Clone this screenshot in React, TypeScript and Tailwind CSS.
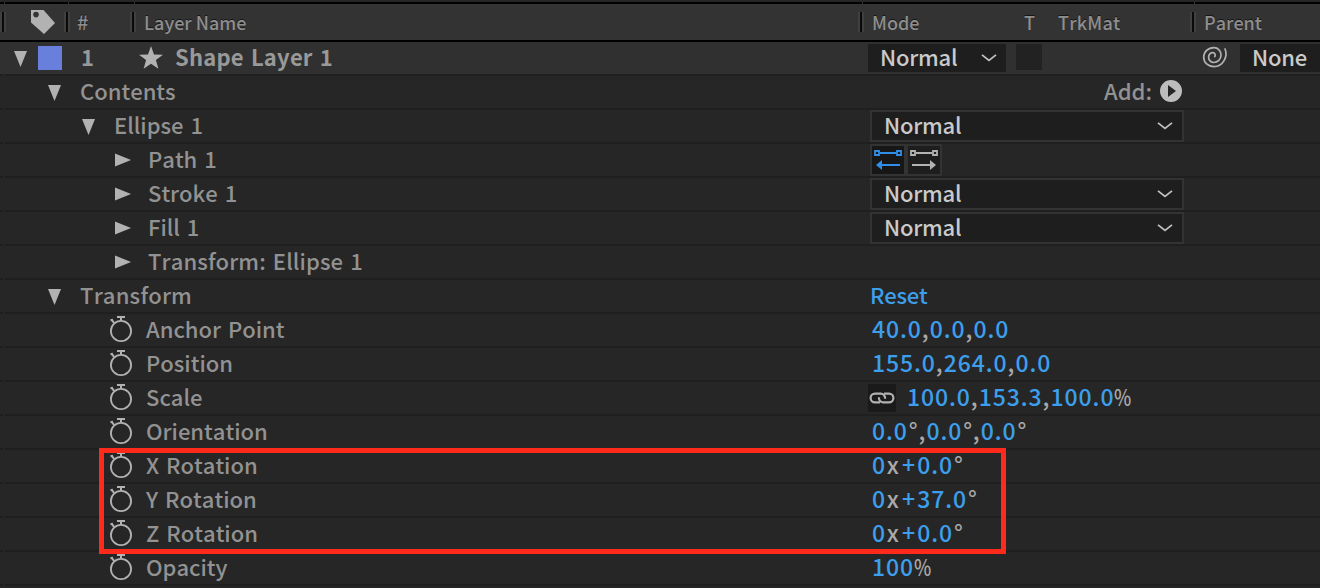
import type { ReactNode } from "react";

const SANS = "font-['Noto_Sans_CJK_SC','Noto_Sans',sans-serif]";

function Down() {
  return (
    <svg className="h-4 w-[13px] shrink-0" viewBox="0 0 13 16">
      <path d="M0 0H13L6.5 16Z" fill="#b2b2b2" />
    </svg>
  );
}

function Right() {
  return (
    <svg className="h-[14px] w-4 shrink-0" viewBox="0 0 16 14">
      <path d="M0 0.5L16 7L0 13.5Z" fill="#b2b2b2" />
    </svg>
  );
}

function Stopwatch() {
  return (
    <svg className="h-7 w-6 shrink-0" viewBox="0 0 24 28" fill="none" stroke="#b2b2b2">
      <circle cx="12" cy="17" r="10.1" strokeWidth="1.8" />
      <path d="M8 3H16M12 3V7M1.5 6.3L4 5.6M3 6L5 9" strokeWidth="2" />
    </svg>
  );
}

function Chevron() {
  return (
    <svg className="h-2 w-4 shrink-0" viewBox="0 0 16 8" fill="none" stroke="#c0c0c0" strokeWidth="1.8">
      <path d="M1 0.9L8 6.4L15 0.9" />
    </svg>
  );
}

function Divider() {
  return (
    <span className="flex h-5 shrink-0">
      <i className="w-0.5 bg-[#404040]" />
      <i className="w-0.5 bg-[#0a0a0a]" />
      <i className="w-0.5 bg-[#404040]" />
    </span>
  );
}

function Label({ children, className = "font-medium text-[#929292]" }: { children: ReactNode; className?: string }) {
  return (
    <span className={`-mt-1 block whitespace-nowrap text-[22px] leading-8 [font-kerning:none] [word-spacing:2px] ${className}`}>
      {children}
    </span>
  );
}

function Row({ left, right, active = false }: { left: ReactNode; right?: ReactNode; active?: boolean }) {
  return (
    <div className="h-[34px] shrink-0">
      <div className={`flex h-8 ${active ? "bg-[#303030]" : "bg-[#262626]"}`}>
        <div className="flex w-[868px] shrink-0 items-center">{left}</div>
        <div className="flex min-w-0 grow items-center">{right}</div>
      </div>
      <div className="flex h-0.5 gap-0.5 bg-[#272727]">
        <i className="w-[3px] bg-[#1f1f1f]" />
        <i className="grow bg-[#1f1f1f]" />
      </div>
    </div>
  );
}

function WideSelect() {
  return (
    <div className="ml-0.5 flex h-8 w-[314px] items-center justify-between border-2 border-[#333] bg-[#1e1e1e] pr-[9px] pl-3">
      <Label className="font-medium tracking-[-.2px] text-[#cacaca]">Normal</Label>
      <Chevron />
    </div>
  );
}

function Value({ children, className = "pl-1" }: { children: ReactNode; className?: string }) {
  return (
    <div className={`-mt-1 flex whitespace-nowrap text-[23px] leading-8 font-medium tracking-[.9px] text-[#3d9fec] ${className}`}>
      {children}
    </div>
  );
}

function Sep({ children, className = "" }: { children: ReactNode; className?: string }) {
  return <span className={`text-[#a9a9a9] ${className}`}>{children}</span>;
}

const Comma = () => <Sep className="w-2">,</Sep>;
const Degree = () => <Sep className="w-[10.6px] pl-px">°</Sep>;
const Percent = () => <Sep className="origin-left scale-x-[.8]">%</Sep>;

function Rotation({ value }: { value: string }) {
  return (
    <Value>
      <span>0</span>
      <Sep className="w-[14.5px] text-center">x</Sep>
      <span className="w-[16.8px] text-center">+</span>
      <span>{value}</span>
      <Degree />
    </Value>
  );
}

function Property({ name }: { name: string }) {
  return (
    <>
      <span className="-mt-1 ml-[109px]"><Stopwatch /></span>
      <Label className="ml-[13px] font-medium text-[#929292]">{name}</Label>
    </>
  );
}

function Child({ name, className = "font-medium text-[#929292]" }: { name: string; className?: string }) {
  return (
    <>
      <span className="mr-[17px] ml-[115px]"><Right /></span>
      <Label className={className}>{name}</Label>
    </>
  );
}

function Header() {
  return (
    <>
      <div className="h-0.5 shrink-0 bg-[#262626]" />
      <div className="flex h-0.5 shrink-0 gap-px bg-[#333]">
        <i className="w-1 bg-black" />
        <i className="w-[63px] bg-black" />
        <i className="w-[65px] bg-black" />
        <i className="w-[727px] bg-black" />
        <i className="w-[331px] bg-black" />
        <i className="grow bg-black" />
      </div>
      <div className="flex h-9 shrink-0 items-center bg-[#333] text-[18px] leading-9 font-medium text-[#8e8e8e] [font-kerning:none] [text-shadow:0_-1.5px_0_#151515]">
        <div className="flex w-16 items-center"><Divider />
          <svg className="ml-[25px] h-6 w-6" viewBox="0 0 24 24">
            <path fillRule="evenodd" d="M0 0H12.5L24 13L13 24L0 12.5ZM5 1.8A2.8 2.8 0 1 0 5 7.4A2.8 2.8 0 1 0 5 1.8Z" fill="#b2b2b2" />
          </svg>
        </div>
        <div className="flex w-[66px] items-center"><Divider /><span className="ml-[7px] text-[20px]">#</span></div>
        <div className="flex w-[728px] items-center"><Divider /><span className="ml-2">Layer Name</span></div>
        <div className="flex w-[332px] items-center"><Divider />
          <span className="ml-2 w-[152px]">Mode</span>
          <span className="w-[34px]">T</span>
          <span className="tracking-[.2px]">TrkMat</span>
        </div>
        <div className="flex grow items-center"><Divider /><span className="ml-2">Parent</span></div>
      </div>
      <div className="h-0.5 shrink-0 bg-black" />
    </>
  );
}

export default function App() {
  return (
    <div className={`relative flex h-[588px] w-[1320px] flex-col overflow-hidden bg-[#262626] text-[#999] ${SANS}`}>
      <Header />
      <Row
        active
        left={
          <>
            <span className="ml-3.5 mt-0.5"><Down /></span>
            <span className="ml-[11px] h-6 w-6 bg-[#6880dc]" />
            <Label className="ml-[19px] font-bold">1</Label>
            <svg className="ml-[45px] h-6 w-6" viewBox="0 0 24 24">
              <path d="M12 0L15 8.4L24 8.7L16.9 14.1L19.4 22.8L12 17.7L4.6 22.8L7.1 14.1L0 8.7L9 8.4Z" fill="#b2b2b2" />
            </svg>
            <Label className="ml-3 font-bold tracking-[.2px]">Shape Layer 1</Label>
          </>
        }
        right={
          <>
            <div className="flex h-7 w-[138px] items-center justify-between bg-[#1e1e1e] pr-[9px] pl-3">
              <Label className="font-medium tracking-[-.2px] text-[#cacaca]">Normal</Label>
              <Chevron />
            </div>
            <span className="-mt-0.5 ml-2.5 h-[26px] w-[26px] bg-[#222]" />
            <svg className="ml-[160px] h-6 w-7" viewBox="0 0 28 24" fill="none" stroke="#b2b2b2" strokeWidth="1.7" strokeLinecap="round">
              <path d="M23 3C26 10 21.5 20.6 12 20.6C6 20.6 1.7 16.5 1.7 11.3C1.7 6 6 1.6 12 1.6C16 1.6 19 5 19 9C19 13.5 15.5 16.5 11.8 16.5C8.8 16.5 6.6 14 6.6 11.2C6.6 8.5 8.5 6.7 10.8 6.7C13 6.7 13.8 9 12.8 10.5" />
            </svg>
            <div className="ml-2.5 flex h-7 grow items-center bg-[#1e1e1e] pl-3">
              <Label className="font-medium tracking-[-.2px] text-[#cacaca]">None</Label>
            </div>
          </>
        }
      />
      <Row
        left={<><span className="mt-0.5 mr-[19px] ml-12"><Down /></span><Label>Contents</Label></>}
        right={
          <>
            <span className="w-[236px]" />
            <Label>Add:</Label>
            <svg className="-mt-0.5 ml-auto h-[22px] w-[22px]" viewBox="0 0 22 22">
              <path fillRule="evenodd" d="M11 0A11 11 0 1 1 11 22A11 11 0 1 1 11 0ZM8 5V17L16 11Z" fill="#bdbdbd" />
            </svg>
            <span className="w-[138px]" />
          </>
        }
      />
      <Row left={<><span className="mt-0.5 mr-[19px] ml-[82px]"><Down /></span><Label>Ellipse 1</Label></>} right={<WideSelect />} />
      <Row
        left={<Child name="Path 1" />}
        right={
          <div className="ml-0.5 flex h-8 w-[72px] justify-between border-2 border-[#333] bg-[#333]">
            <svg className="h-7 w-8 bg-[#171717]" viewBox="0 0 32 28" fill="none" stroke="#308ee8" strokeWidth="1.8">
              <path d="M3 5H7V9H3ZM25 5H29V9H25ZM8 7H24M9 19H28" />
              <path d="M4 19L10 14V24Z" fill="#308ee8" stroke="none" />
            </svg>
            <svg className="h-7 w-8 bg-[#1e1e1e]" viewBox="0 0 32 28" fill="none" stroke="#b2b2b2" strokeWidth="1.8">
              <path d="M3 5H7V9H3ZM25 5H29V9H25ZM8 7H24M4 19H23" />
              <path d="M28 19L22 14V24Z" fill="#b2b2b2" stroke="none" />
            </svg>
          </div>
        }
      />
      <Row left={<Child name="Stroke 1" />} right={<WideSelect />} />
      <Row left={<Child name="Fill 1" />} right={<WideSelect />} />
      <Row left={<Child name="Transform: Ellipse 1" className="font-medium tracking-[.1px] text-[#929292]" />} />
      <Row
        left={<><span className="mt-0.5 mr-[19px] ml-12"><Down /></span><Label className="font-medium tracking-[.2px] text-[#929292]">Transform</Label></>}
        right={<Label className="ml-0.5 font-medium tracking-[-.2px] text-[#3d9fec]">Reset</Label>}
      />
      <Row left={<Property name="Anchor Point" />} right={<Value>40.0<Comma />0.0<Comma />0.0</Value>} />
      <Row left={<Property name="Position" />} right={<Value>155.0<Comma />264.0<Comma />0.0</Value>} />
      <Row
        left={<Property name="Scale" />}
        right={
          <>
            <svg className="h-7 w-7 bg-[#1a1a1a]" viewBox="0 0 28 28" fill="none" stroke="#b2b2b2" strokeWidth="2.2">
              <path d="M12 18.4H7A4.4 4.4 0 0 1 7 9.6H13A4.4 4.4 0 0 1 17 14.8" />
              <path d="M16 9.6H21A4.4 4.4 0 0 1 21 18.4H15A4.4 4.4 0 0 1 11 13.2" />
            </svg>
            <Value className="pl-[11px]">100.0<Comma />153.3<Comma />100.0<Percent /></Value>
          </>
        }
      />
      <Row left={<Property name="Orientation" />} right={<Value>0.0<Degree /><Comma />0.0<Degree /><Comma />0.0<Degree /></Value>} />
      <Row left={<Property name="X Rotation" />} right={<Rotation value="0.0" />} />
      <Row left={<Property name="Y Rotation" />} right={<Rotation value="37.0" />} />
      <Row left={<Property name="Z Rotation" />} right={<Rotation value="0.0" />} />
      <Row left={<Property name="Opacity" />} right={<Value>100<Percent /></Value>} />
      <div className="absolute top-[448px] left-[99px] h-[106px] w-[907px] border-5 border-[#ff2a1c]" />
    </div>
  );
}
